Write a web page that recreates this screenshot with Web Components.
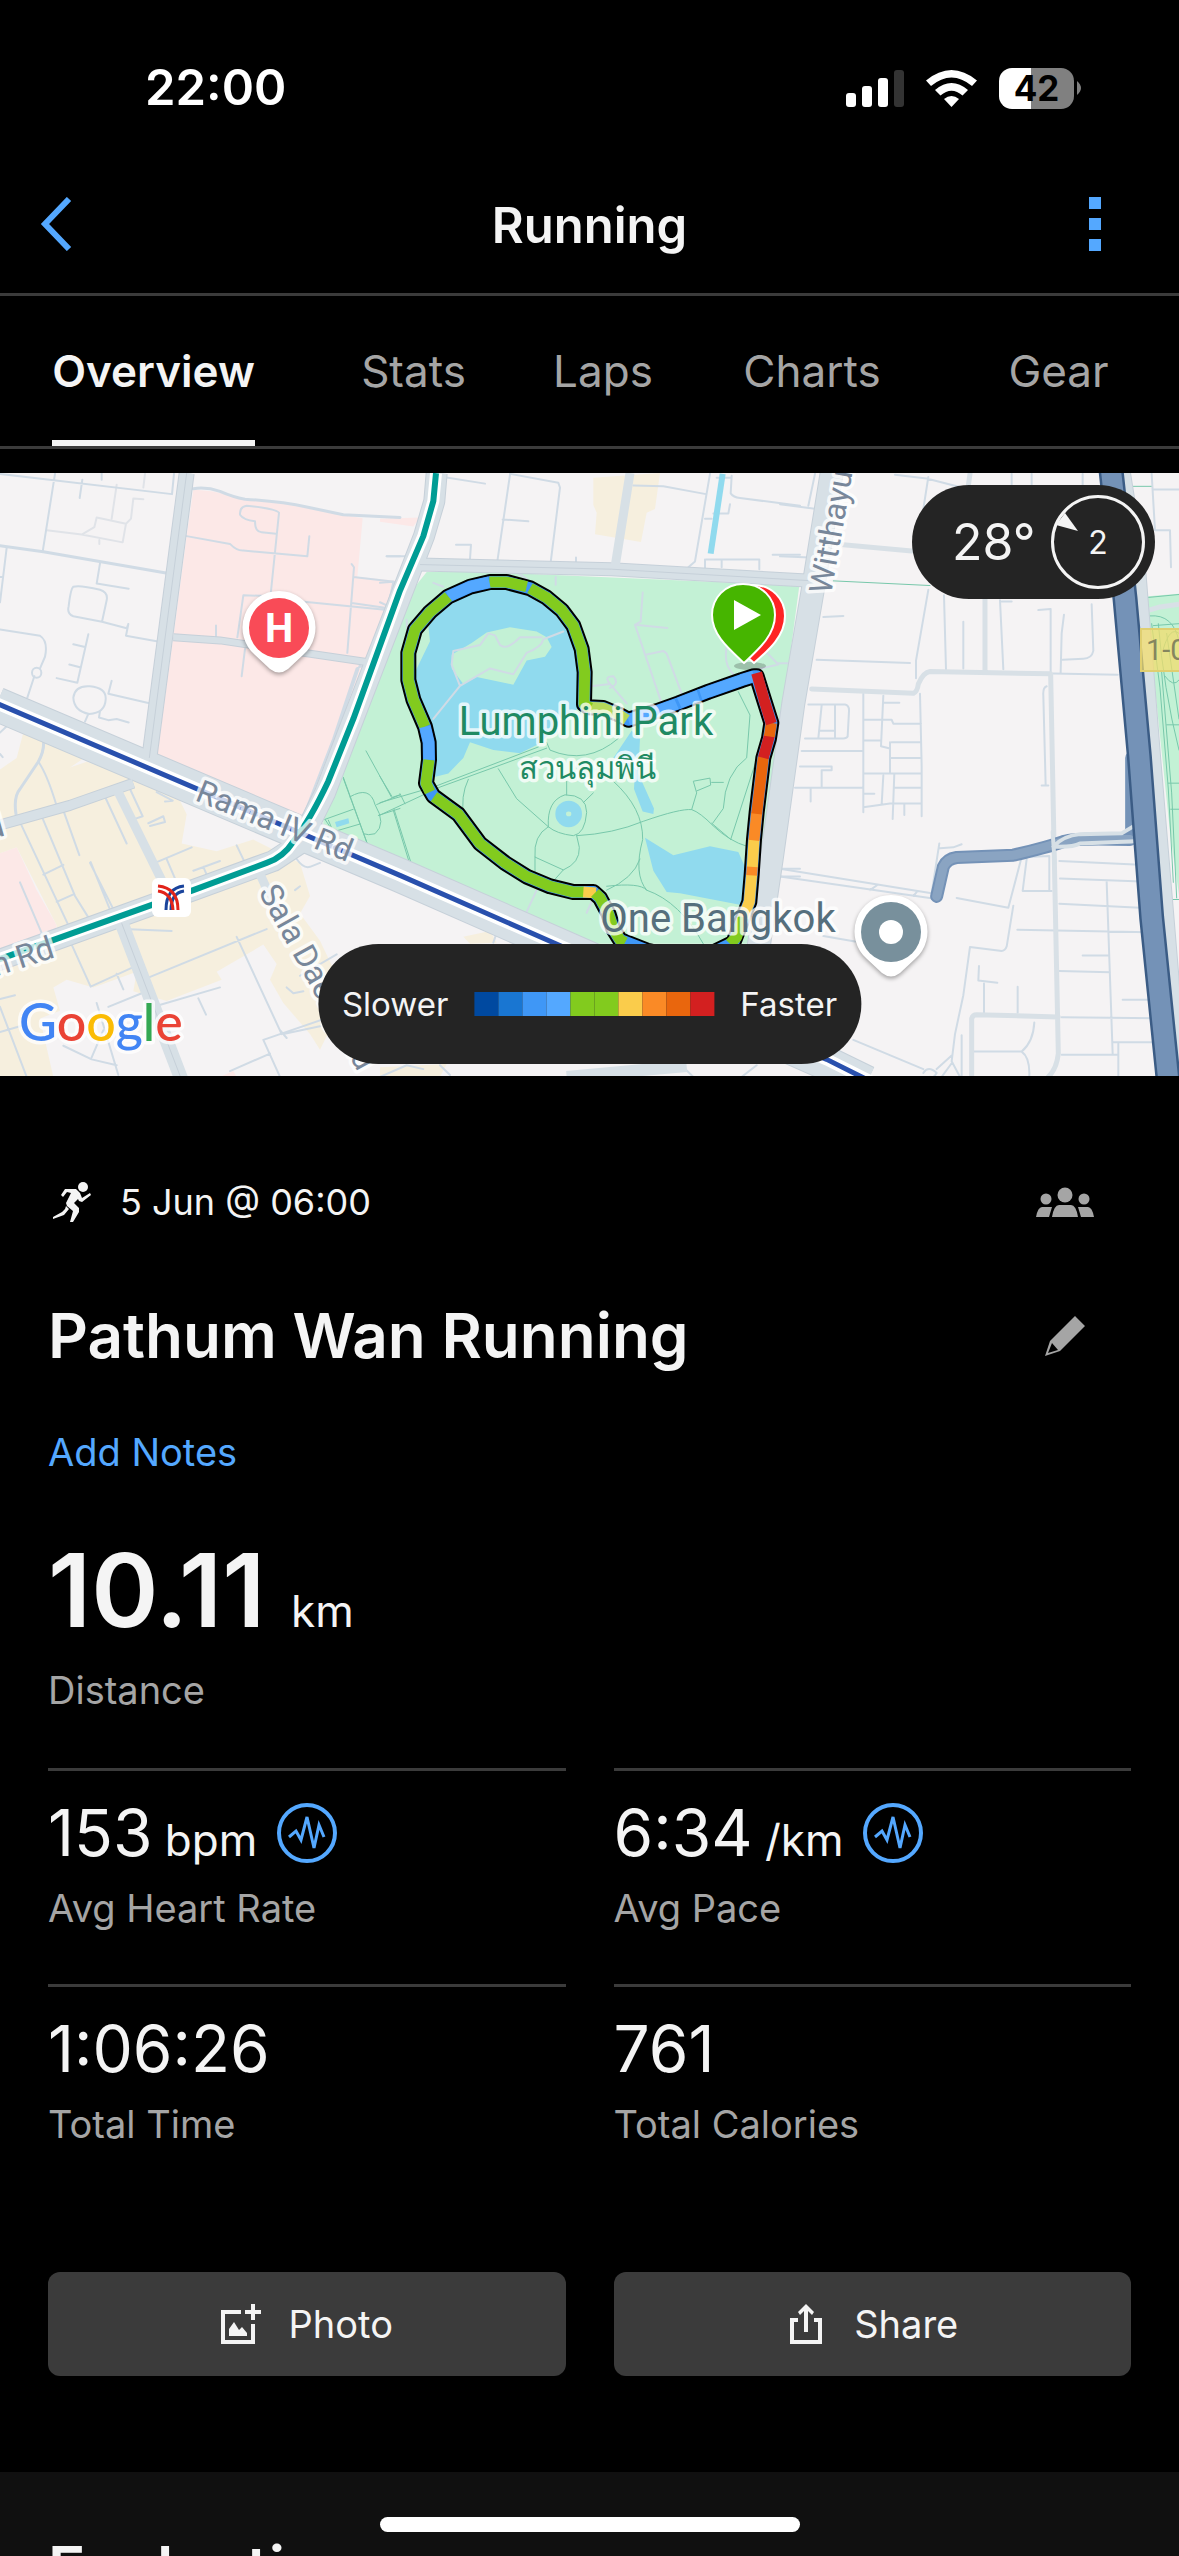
<!DOCTYPE html>
<html lang="en">
<head>
<meta charset="utf-8">
<meta name="viewport" content="width=device-width, initial-scale=1">
<title>Running</title>
<style>
  :root {
    --text: #f4f4f4;
    --muted: #a5a5a5;
    --accent: #54a8ff;
    --line: #3b3b3b;
    --panel: #242424;
    --gutter: 48px;
  }
  html, body { margin: 0; height: 100%; background: #000; overflow: hidden; }
  body { color: var(--text); font-family: Inter, "Noto Sans", sans-serif; }
</style>
</head>
<body>
<activity-app></activity-app>

<script>
const define = (name, css, html) => {
  const template = document.createElement('template');
  template.innerHTML = `<style>
    :host { display: block; box-sizing: border-box; }
    *, *::before { box-sizing: border-box; }
    button, a { font: inherit; color: inherit; background: none; border: 0; padding: 0; margin: 0; text-decoration: none; }
    svg { display: block; }
    h1, h2, p { margin: 0; font-weight: inherit; font-size: inherit; }
    ${css}</style>${html}`;
  customElements.define(name, class extends HTMLElement {
    constructor() {
      super();
      this.attachShadow({ mode: 'open' }).append(template.content.cloneNode(true));
    }
  });
};

define('status-bar', `
  :host { display: flex; justify-content: space-between; align-items: center; height: 176px; padding: 0 98px 0 145px; color: #fff; }
  time { font-size: 49px; font-weight: 600; line-height: 60px; }
  .icons { display: flex; align-items: center; gap: 22px; }
  .battery { display: flex; align-items: center; gap: 3px; }
  .level { width: 75px; height: 41px; border-radius: 13px; background: linear-gradient(90deg, #fff 43%, #808080 43%);
    color: #000; font-size: 35px; font-weight: 700; line-height: 41px; text-align: center; }
`, `
  <time>22:00</time>
  <div class="icons">
    <svg width="58" height="37" viewBox="0 0 58 37" fill="#fff" aria-hidden="true">
      <rect y="23" width="10" height="14" rx="3"/><rect x="16" y="16" width="10" height="21" rx="3"/>
      <rect x="32" y="8" width="10" height="29" rx="3"/><rect x="48" width="10" height="37" rx="3" fill="#333"/>
    </svg>
    <svg width="51" height="37" viewBox="0 0 51 37" fill="#fff" aria-hidden="true">
      <path d="M0 10.500Q25.500-10.500 51 10.500L46 16Q25.500-1 5 16Z"/>
      <path d="M9 20Q25.500 6 42 20L36.500 25.500Q25.500 16 14.500 25.500Z"/>
      <path d="M18 29Q25.500 23 33 29L25.500 37Z"/>
    </svg>
    <div class="battery"><div class="level">42</div>
      <svg width="4" height="14" viewBox="0 0 4 14" fill="#808080" aria-hidden="true"><path d="M0 0Q8 7 0 14Z"/></svg>
    </div>
  </div>
`);

define('nav-bar', `
  :host { display: grid; grid-template-columns: 169px 1fr 169px; align-items: center; height: 120px; padding-bottom: 22px; border-bottom: 3px solid var(--line); }
  h1 { text-align: center; font-size: 49px; font-weight: 600; line-height: 64px; padding-top: 4px; }
  button { height: 90px; display: grid; place-items: center; color: var(--accent); }
  .back { justify-items: start; padding-left: 40px; }
`, `
  <button class="back" aria-label="Back"><svg width="32" height="54" viewBox="0 0 32 54" fill="none" stroke="currentColor" stroke-width="6"><path d="M29 2L5 27L29 52"/></svg></button>
  <h1>Running</h1>
  <button aria-label="More"><svg width="12" height="54" viewBox="0 0 12 54" fill="currentColor"><path d="M0 0h12v12H0zM0 21h12v12H0zM0 42h12v12H0z"/></svg></button>
`);

define('tab-bar', `
  :host { border-bottom: 3px solid var(--line); }
  nav { display: grid; grid-template-columns: 307fr 213fr 166fr 252fr 241fr; justify-items: center; }
  a { display: block; height: 150px; font-size: 44px; line-height: 150px; color: var(--muted); }
  a[aria-current] { color: var(--text); font-weight: 600; border-bottom: 6px solid var(--text); }
`, `
  <nav><a href="#overview" aria-current="page">Overview</a><a href="#stats">Stats</a><a href="#laps">Laps</a><a href="#charts">Charts</a><a href="#gear">Gear</a></nav>
`);

define('weather-badge', `
  :host { display: flex; align-items: center; justify-content: space-between; width: 243px; height: 114px; padding: 0 10px 0 40px; border-radius: 57px; background: var(--panel); }
  .temp { font-size: 50px; }
  .wind { display: grid; place-items: center; width: 94px; height: 94px; }
  .wind > * { grid-area: 1 / 1; }
  .wind span { font-size: 32px; }
`, `
  <span class="temp">28°</span>
  <div class="wind"><svg width="94" height="94" viewBox="0 0 94 94" aria-hidden="true"><circle cx="47" cy="47" r="45.500" fill="none" stroke="#f4f4f4" stroke-width="3"/><path d="M14 18L5 30L27 36Z" fill="#f4f4f4"/></svg><span>2</span></div>
`);

define('speed-legend', `
  :host { display: flex; align-items: center; gap: 26px; height: 120px; padding: 0 24px; border-radius: 60px; background: var(--panel); font-size: 33px; }
  .scale { display: flex; }
  i { width: 24px; height: 24px; }
`, `
  <span>Slower</span>
  <div class="scale">${['#0049a0', '#1976d2', '#3f97f6', '#54a8ff', '#82cb1e', '#82cb1e', '#facc4b', '#fa8a26', '#e9660d', '#d32020'].map(c => `<i style="background:${c}"></i>`).join('')}</div>
  <span>Faster</span>
`);

const west = s => `<g>${s}</g>`;
const mid = s => `<g transform="translate(1140 0)">${s}</g>`;
const east = s => `<g transform="translate(2340 0)">${s}</g>`;
const seg = (color, d) => `<path stroke="${color}" d="${d}"/>`;
const route = 'M1122,530L1085,540L985,570L895,600L830,620L745,642L715,628L670,612L625,610L612,602L614,520L605,460L580,400L545,360L500,328L450,304L380,288L330,288L270,300L205,325L150,365L105,410L85,470L85,540L100,590L135,660L146,700L147,745L138,805L160,838L235,885L300,960L375,1010L440,1045L510,1070L580,1085L640,1085L660,1100L685,1140L700,1180L720,1208L800,1235L900,1255L1000,1240L1060,1215L1085,1160L1108,1110L1115,1040L1122,950L1130,880L1150,740L1167,690L1174,650L1152,590L1130,530Z';

define('route-map', `
  :host { position: relative; overflow: hidden; background: #f5f3f4; }
  .map { width: 100%; height: auto; }
  .map path, .map ellipse { vector-effect: non-scaling-stroke; }
  .halo { paint-order: stroke; stroke: #fff; stroke-opacity: .75; stroke-width: 7; stroke-linejoin: round; }
  .place { font-family: Roboto, Inter, sans-serif; font-weight: 400; font-size: 40px; }
  .local { font-size: 31px; }
  .street { font-family: Roboto, Inter, sans-serif; font-size: 32px; fill: #78879a; }
  weather-badge { position: absolute; top: 12px; right: 24px; }
  speed-legend { position: absolute; bottom: 12px; left: 50%; transform: translateX(-50%); }
`, `
<svg class="map" viewBox="0 473 1179 603" role="img" aria-label="Route map of Lumphini Park">
  <g transform="translate(0 470) scale(.33333 .38903)" fill="none" stroke-linecap="round" stroke-linejoin="round">
    <g stroke="none">
      ${west(`
        <path fill="#fce8e7" d="M580,50L640,55L735,75L860,88L1030,115L1088,124L1072,275L1190,285L1165,380L930,885L880,885L470,735L520,430L560,170ZM0,985L50,970L110,1080L170,1170L160,1210L0,1245ZM1140,125L1260,122L1240,145L1140,133ZM660,1560L700,1545L710,1560Z"/>
        <path fill="#f6efde" d="M70,675L270,730L210,765L260,750L400,790L540,850L560,885L545,960L650,980L760,950L900,1010L930,1095L900,1140L960,1210L1010,1300L1000,1420L960,1490L930,1450L850,1370L810,1310L830,1270L790,1220L650,1290L665,1310L500,1365L400,1340L410,1290L280,1330L200,1310L160,1330L180,1390L120,1410L160,1560L0,1560L0,1245L170,1205L170,1170L50,970L0,985L0,770L50,740Z"/>`)}
      ${mid(`
        <path fill="#c3f1d5" d="M140,262L300,262L1258,297L1205,640L1110,1218L640,1218L-170,965L-170,895L0,520L105,300Z"/>
        <path fill="#f6efde" d="M640,20L840,8L825,100L800,110L783,185L645,165L650,110L640,90ZM250,1200L330,1185L350,1215L270,1218ZM0,1535L200,1527L180,1560L0,1560Z"/>
        <path fill="#90daee" d="M210,340L290,312L400,302L500,345L580,430L597,540L597,610L560,640L475,705L420,728L340,720L270,700L250,740L205,780L160,790L150,690L120,610L105,520L150,440L145,400L180,360ZM755,670L780,690L775,780L822,870L820,884L788,878L762,820L765,770L700,740ZM795,945L880,990L990,967L1075,982L1100,1030L1095,1120L900,1088L860,1085L820,1030Z"/>
        <path fill="#c3f1d5" d="M215,475L275,445L320,418L390,404L470,415L500,430L515,455L495,480L440,490L400,552L290,532L250,550L215,510Z"/>
        <ellipse cx="566" cy="884" rx="40" ry="34" fill="#90daee"/><ellipse cx="566" cy="884" rx="8" ry="6" fill="#c3f1d5"/>`)}
      ${west(`<path fill="#90daee" d="M1005,905L1045,895L1048,908L1010,918Z"/>`)}
      ${east(`<path fill="#c3f1d5" d="M1095,325L1200,318L1200,1110L1170,930L1125,560Z"/>`)}
    </g>
    <g stroke="#78c8ab" stroke-width="1">
      ${west(`<path d="M1030,793L1105,968M1098,722L1175,842L1200,835M975,898L1060,872M1000,930L1080,910M985,900L1000,930L975,898M1050,840Q1110,810 1125,860Q1160,910 1125,935Q1105,940 1090,935M1130,860L1200,835M1135,888L1200,870M1180,875L1230,1015"/>`)}
      ${mid(`<path d="M-110,790L-35,968M0,788L35,838M0,855L160,815L475,712M0,887L180,815L500,715M42,872L95,1015M60,832L75,858M265,795Q240,840 252,890M355,768L410,845L505,917M500,700L510,720Q620,760 715,690M590,940Q700,935 790,903Q900,870 935,873Q960,880 1000,915Q1050,955 1100,967M700,800Q790,870 788,950Q760,1040 800,1080M680,1080Q760,1050 780,1000M680,1070Q780,1060 800,1080Q900,1110 970,1218M505,917Q500,850 555,835Q620,835 620,880Q615,935 580,940Q530,935 505,917Q460,940 465,995L550,1028Q600,1010 598,970L590,940M465,995V1050M550,1028L525,1052M560,835V800M610,855L640,830M1075,570L1110,630L1100,740Q1035,780 1030,870L998,908M1150,690L1052,950M935,873L950,830L940,800L990,792L992,810L950,825M995,803H1030M995,908L1050,948"/>`)}
      ${east(`<path d="M160,285L450,297M1055,42H1115M1100,328L1197,320M1110,375Q1180,370 1197,440M1115,395L1140,560L1165,820L1180,1060M1135,395Q1150,560 1197,720M1160,420L1197,640M1160,655H1197M1165,805H1197M1172,872H1197M1155,530Q1180,560 1197,540M1120,400L1197,395M1150,460Q1170,400 1197,420M1145,520L1175,830L1190,1100M1160,1104H1197"/>`)}
    </g>
    <g stroke="#d0dbe5" stroke-width="2">
      ${west(`
        <path stroke="#e0e3e8" d="M350,38L335,125M430,75L400,73L393,125L378,138L368,186L245,166L283,147L290,122L378,138M140,155L245,166M298,180V190M435,10L430,45"/>
        <path d="M165,10L128,210M0,10L516,62L522,10M247,25L239,72M305,8V25M20,200L0,340M0,275H8M300,240L290,292L386,305M220,300Q240,295 300,308Q325,315 320,335L306,390L220,376Q200,370 206,350Q212,305 220,300M306,390L380,407L385,396L378,426L470,440M0,410L120,426Q145,440 135,480L120,510M103,530L82,585M265,422L232,547M220,448L255,455M208,500L240,507M170,535L232,547M220,585Q225,553 270,556Q320,560 317,590Q315,625 268,627Q222,620 220,585M335,542L325,575L445,599M265,627L255,647M300,620L297,636L325,643L350,640L386,649M130,690Q135,720 115,750Q140,780 168,858M0,675L25,655M0,730L8,738"/>
        <ellipse cx="110" cy="521" rx="14" ry="13"/>
        <path stroke-width="3" d="M0,195L130,210L498,265M130,690Q135,720 115,750L60,820Q40,840 48,885M580,48Q620,43 660,55Q700,70 735,75Q850,82 920,95L1030,115L1200,122"/>
        <path d="M560,170L690,190Q710,208 730,207L922,222L928,170M837,110L812,320M837,110Q830,100 740,92Q718,95 720,115Q730,128 765,132Q765,160 785,160L828,164M712,430L730,322L800,324M905,338L1185,362M1060,275L1183,287L1160,355L1055,342M1055,242L1062,250L1042,470M1110,495L1070,510L1000,690L910,890M1080,500L1005,690L940,850M648,400V430M735,460L725,530M1160,222H1200M470,828L518,850L495,852M390,820L428,890L400,898M315,840L380,960M60,905L205,1170M125,890L225,1095L265,1150M190,875L238,990M130,1040L190,1015M170,1110L222,1090M60,1060L130,1200M270,1010L370,1180L515,1185M272,1008L330,1130M465,1010L575,970M500,1000L540,1080M580,1030L660,1005M610,1020L620,1040M710,965L735,1010M445,1305L800,1180M710,1200L845,1450M215,1220L272,1328L395,1280M350,1295L370,1335M325,1380L440,1340M440,1385L660,1330M595,1358L618,1400M290,1370L355,1555M0,1380L80,1560M0,1445L60,1430M190,1480L275,1515L350,1530M790,1465L840,1560M790,1465L1010,1400M690,1545L810,1500M885,1080L900,1070M900,1300L1010,1245M860,1330L880,1345L910,1340M850,1450L960,1430M275,1510L310,1440M0,1360L45,1350M840,1440L860,1460M450,915L495,905L490,890L445,908M890,1000Q910,1025 930,1020L960,1010"/>`)}
      ${mid(`
        <path d="M190,18L315,35M390,12L352,235M390,10L535,33L540,45L512,238M368,127L445,132M228,192H273L270,228M588,225V240M20,222H75M0,290L40,287L25,350L0,340M760,40L850,42L978,62M990,10L945,235L925,250M1055,15L1052,60Q1060,70 1080,72L1260,92M1010,20H1055M1050,88L1045,112H1000M975,125H995M978,230H1138V255M1025,232V250M975,230V260M1178,218H1260M160,290L190,300M160,640L240,555L215,500L220,465L300,450L325,420L345,425L360,450Q380,465 420,430L485,430M240,555L330,510L400,525L440,470Q485,455 490,435L550,415M415,265L440,280M527,275V295M788,315L782,390L765,398L845,600M765,398L862,406M797,475L850,465L860,472L905,575M1040,455Q1030,500 1060,525M1120,515L1195,500L1150,460M640,555L690,550L740,600M690,550Q670,530 700,530Q720,550 690,560M1190,497H1235M435,1145L470,1080M80,385L85,480M620,1138L640,1100M350,1190L340,1215M1200,1025H1260M1200,1045H1260M900,1527L940,1560M1085,1560L1130,1530M0,1560L80,1530L130,1540M180,1530L210,1555"/>`)}
      ${east(`
        <path d="M0,88L110,100M105,10L85,92M0,222L90,225M345,12L440,22L545,45M445,18L430,100M695,10V40M755,10V40M908,10V40M190,375L130,378M110,488L390,496M445,308L408,490V535M492,322L498,512M550,390V510M660,335L670,512M665,338H695M775,360L812,357V520M852,372L845,420L842,520M935,345L940,465Q935,485 910,485L848,488M820,523L1013,526M85,603H195Q208,605 207,620L203,685Q200,690 190,690H75M125,605L115,690M165,605V690M118,670H165M250,575V880M310,580L303,710L330,716M310,598H358M250,642H335L340,652H423M250,695H303M335,700H423M330,700V780M330,740H423M250,780H425M343,780L338,897M310,785L305,860M250,832H283M345,817H425M420,575L425,760V890M250,867L330,857H425M373,857V887M65,722H247M60,762H155V772H125V817M45,817H247M92,820V852M800,556Q788,560 790,580L797,810M785,811H805M0,1025L455,1088M0,1045L470,1103M270,1080L290,1068M400,1095L410,1085M530,1100L685,1125L725,995Q740,980 820,968M740,1000L728,1082H815M740,995L808,992V1080M700,1120L680,1225Q675,1238 660,1236L570,1226L550,1350L525,1450L515,1520L540,1560M838,1005L1080,1015M840,1050L1085,1058M838,1115L1095,1126M712,1182L1105,1188M838,1288L990,1291M908,1248H985M980,1058L998,1500M845,1407L1130,1409M1028,1362H1122M1000,1471H1140M845,1503H1015M1015,1475V1557M597,1275L595,1312L652,1318M612,1320V1395M713,1328V1395M583,1495H725Q760,1470 763,1420M725,1495Q750,1510 748,1557M545,1453V1557M220,1465L430,1540M430,1550Q445,1530 470,1550Q460,1565 450,1560M470,1540L515,1505M485,1560L515,1525M130,1198L225,1212M455,1088L478,960M480,972L520,970L545,962M1115,10L1125,155H1170L1173,250M1120,50H1197"/>
        <path stroke-width="5" stroke="#d8e0e6" d="M95,563L400,574Q412,570 415,550Q430,520 450,518L812,524L822,960L835,1500Q830,1540 805,1560M615,330V515M570,10L565,40M190,192L395,208M575,1560V1410Q578,1400 590,1400L835,1406M1100,362L1140,352L1200,345"/>`)}
    </g>
    <g stroke-linecap="butt">
      <path stroke="#c6d0d9" stroke-width="35" d="M-10,602L1200,1042L1700,1230L2480,1525L2600,1575"/>
      <path stroke="#c6d0d9" stroke-width="16" d="M560,8L448,740"/>
      <path stroke="#c6d0d9" stroke-width="8" d="M520,430L660,438L1110,495"/>
      <path stroke="#c6d0d9" stroke-width="11" d="M-10,915L210,862L400,805"/>
      <path stroke="#c6d0d9" stroke-width="22" d="M1310,8L1303,80L1272,170L1060,640L975,830L900,960L820,1005L580,1080L-10,1262"/>
      <path stroke="#c6d0d9" stroke-width="14" d="M1260,243L1835,255L2460,286"/>
      <path stroke="#c6d0d9" stroke-width="24" d="M2495,8L2440,300L2380,600L2315,1000L2270,1260"/>
      <path stroke="#d7e0e6" stroke-width="33" d="M-10,602L1200,1042L1700,1230L2480,1525L2600,1575"/>
      <path stroke="#d7e0e6" stroke-width="14" d="M560,8L448,740M365,1165L545,1568"/>
      <path stroke="#d7e0e6" stroke-width="9" d="M1890,8L1845,250M-10,915L210,862L400,805M350,820L500,1080M770,1020L850,1170"/>
      <path stroke="#d7e0e6" stroke-width="6" d="M520,430L660,438L1110,495"/>
      <path stroke="#d7e0e6" stroke-width="20" d="M1310,8L1303,80L1272,170L1060,640L975,830L900,960L820,1005L580,1080L-10,1262"/>
      <path stroke="#d7e0e6" stroke-width="12" d="M1260,243L1835,255L2460,286M1700,1560L2060,1532"/>
      <path stroke="#d7e0e6" stroke-width="22" d="M2495,8L2440,300L2380,600L2315,1000L2270,1260"/>
      <path stroke="#c6d0d9" stroke-width="1" d="M560,8L448,740M1260,243L1835,255L2460,286M365,1165L545,1568"/>
      ${mid('<path stroke="#90daee" stroke-width="6" d="M1028,10L992,215"/>')}
      <path stroke="#fff" stroke-width="12" d="M-10,600L1200,1042L1700,1230L2480,1515L2620,1575M1308,8L1300,80L1270,170L1200,310L1060,640L985,800Q930,900 880,955Q850,995 800,1010L580,1080L-10,1260"/>
      <path stroke="#2950ad" stroke-width="5" d="M-10,600L1200,1042L1700,1230L2480,1515L2620,1575"/>
      <path stroke="#009c94" stroke-width="6" d="M1308,8L1300,80L1270,170L1200,310L1060,640L985,800Q930,900 880,955Q850,995 800,1010L580,1080L-10,1260"/>
    </g>
    ${east(`
      <g stroke-linejoin="round">
        <path stroke="#c6d0d9" stroke-width="12" d="M1035,8L1080,250L1125,735L1180,1300L1197,1560"/>
        <path stroke="#d7e0e6" stroke-width="10" d="M1035,8L1080,250L1125,735L1180,1300L1197,1560"/>
        <path stroke="#7492b7" stroke-width="13" d="M470,1096L490,1020Q500,1000 530,996L700,990Q800,970 850,955Q890,945 1050,950M1055,740V930"/>
        <path stroke="#8aa4c2" stroke-width="9" d="M470,1096L490,1020Q500,1000 530,996L700,990Q800,970 850,955Q890,945 1050,950"/>
        <path stroke="#d7e0e6" stroke-width="4" d="M820,968Q850,940 900,936L1025,934L1060,916M820,968Q880,970 900,960L1065,954M818,930L824,1010"/>
        <path stroke="#3b5c85" stroke-width="25" stroke-linecap="butt" d="M993,0L1035,330L1078,735L1115,1150L1165,1570"/>
        <path stroke="#7492b7" stroke-width="20" stroke-linecap="butt" d="M993,0L1035,330L1078,735L1115,1150L1165,1570"/>
      </g>`)}
    ${mid(`
      <path stroke="#000" stroke-width="16" d="${route}"/>
      <path stroke="#3f97f6" stroke-width="12" d="${route}"/>
      <g stroke-width="11" stroke-linecap="butt">
        ${seg('#54a8ff', 'M1122,530L1085,540L985,570L895,600L830,620L745,642')}
        ${seg('#3f97f6', 'M955,579L962,577M890,602L898,599')}
        ${seg('#b5d85a', 'M740,642L715,628L670,612L625,610')}
        ${seg('#82cb1e', 'M630,612L612,602L614,520L605,460L580,400L545,360L500,328L450,304')}
        ${seg('#82cb1e', 'M440,300L380,288L328,288')}
        ${seg('#54a8ff', 'M328,288L270,300L205,325')}
        ${seg('#82cb1e', 'M205,325L150,365L105,410L85,470L85,540L100,590L135,660')}
        ${seg('#54a8ff', 'M135,660L146,700L147,745')}
        ${seg('#82cb1e', 'M147,745L138,805L150,828')}
        ${seg('#82cb1e', 'M162,840L235,885L300,960L375,1010L440,1045L510,1070L580,1085L612,1085')}
        ${seg('#facc4b', 'M610,1085L648,1087')}
        ${seg('#82cb1e', 'M645,1087L660,1100L685,1140L700,1180L720,1208L735,1215')}
        ${seg('#82cb1e', 'M1050,1218L1070,1200L1085,1160L1090,1150')}
        ${seg('#facc4b', 'M1090,1150L1108,1110L1115,1040')}
        ${seg('#fa8a26', 'M1115,1042L1117,1018')}
        ${seg('#facc4b', 'M1117,1020L1122,950')}
        ${seg('#fa8a26', 'M1122,952L1130,882')}
        ${seg('#e9660d', 'M1130,884L1150,738')}
        ${seg('#d32020', 'M1150,740L1166,690L1168,683')}
        ${seg('#e9660d', 'M1168,685L1174,650')}
        ${seg('#d32020', 'M1174,652L1152,590L1130,522')}
      </g>`)}
  </g>

  <rect x="152" y="878" width="39" height="39" rx="6" fill="#fff"/>
  <g fill="none" stroke-width="3"><path stroke="#1a449c" d="M184 886Q166 888 166 910M184 891Q171 893 171 910"/><path stroke="#e2231a" d="M158 886Q178 888 178 910M158 891Q172 893 173 910"/></g>

  <text class="street halo" transform="translate(194 800) rotate(22)">Rama IV Rd</text>
  <text class="street halo" transform="translate(258 892) rotate(61)">Sala Daeng Rd</text>
  <text class="street halo" transform="translate(831 595) rotate(-80)">Witthayu</text>
  <text class="street halo" text-anchor="end" transform="translate(56 957) rotate(-18)">Silom Rd</text>
  <text class="street halo" text-anchor="end" transform="translate(6 835) rotate(-16)">Rd</text>
  <text class="place halo" x="586" y="735" text-anchor="middle" fill="#1f8a63">Lumphini Park</text>
  <text class="place local halo" x="587" y="779" text-anchor="middle" fill="#1f8a63">สวนลุมพินี</text>
  <text class="place halo" x="718" y="932" text-anchor="middle" fill="#566f7d">One Bangkok</text>
  <rect x="1141" y="629" width="60" height="42" fill="#f4dc6a" fill-opacity=".72" stroke="#e0cf70" stroke-width="2"/>
  <text x="1146" y="660" font-family="Roboto, sans-serif" font-size="29" fill="#85865f">1-0</text>

  <g filter="drop-shadow(0 2px 2px rgba(0,0,0,.35))" fill="#fff">
    <path d="M279 591A36.500 36.500 0 0 0 255 655L270 669Q279 676 288 669L303 655A36.500 36.500 0 0 0 279 591Z"/>
    <path d="M891 895A36.500 36.500 0 0 0 867 959L882 973Q891 980 900 973L915 959A36.500 36.500 0 0 0 891 895Z"/>
  </g>
  <circle cx="279" cy="628" r="30" fill="#f94b57"/>
  <text x="279" y="642" text-anchor="middle" font-family="Roboto, sans-serif" font-weight="700" font-size="40" fill="#fff">H</text>
  <circle cx="891" cy="932" r="30" fill="#78909c"/><circle cx="891" cy="932" r="12" fill="#fff"/>

  <ellipse cx="750" cy="666" rx="16" ry="4" fill="#000" opacity=".2"/>
  <g stroke="#fff" stroke-width="2">
    <path fill="#fe2424" d="M753 585C772 585 785 599 785 616C785 636 769 650 754 663C739 650 723 636 723 616C723 599 736 585 753 585Z"/>
    <path fill="#46b500" d="M743 584C762 584 775 598 775 615C775 635 759 649 744 663C729 649 712 635 712 615C712 598 725 584 743 584Z"/>
  </g>
  <path d="M734 600L761 615L734 630Z" fill="#fff"/>

  <text class="halo" x="19" y="1041" font-family="Lato, sans-serif" font-size="52" font-weight="500"><tspan fill="#4285f4">G</tspan><tspan fill="#ea4335">o</tspan><tspan fill="#fbbc05">o</tspan><tspan fill="#4285f4">g</tspan><tspan fill="#34a853">l</tspan><tspan fill="#ea4335">e</tspan></text>
</svg>
<weather-badge></weather-badge>
<speed-legend></speed-legend>
`);

define('metric-tile', `
  :host { border-top: 3px solid var(--line); padding: 26px 0 52px; }
  .value { display: flex; align-items: center; gap: 20px; height: 72px; font-size: 64px; line-height: 72px; }
  ::slotted(small) { font-size: 44px; line-height: 1px; }
  svg { display: none; }
  :host([measured]) svg { display: block; }
  .label { margin-top: 15px; font-size: 38px; line-height: 48px; color: var(--muted); }
`, `
  <div class="value"><span><slot></slot></span>
    <svg width="60" height="60" viewBox="0 0 60 60" fill="none" stroke="#54a8ff" aria-hidden="true"><circle cx="30" cy="30" r="28" stroke-width="4"/><path stroke-width="3" d="M12 34L19 28L24 37L30 14L37 45L42 22L47 34"/></svg>
  </div>
  <div class="label"><slot name="label"></slot></div>
`);

define('action-button', `
  button { display: flex; align-items: center; justify-content: center; gap: 28px; width: 100%; height: 104px; border-radius: 12px; background: var(--line); color: var(--text); font-size: 38px; line-height: 48px; }
`, `<button><slot name="icon"></slot><slot></slot></button>`);

define('activity-summary', `
  :host { padding: 96px var(--gutter); }
  .row { display: flex; align-items: center; justify-content: space-between; }
  .row button { display: grid; place-items: center; width: 132px; height: 60px; color: var(--muted); }
  .when { display: flex; align-items: center; gap: 26px; height: 60px; padding-left: 4px; font-size: 36px; }
  .title { margin-top: 64px; }
  h1 { font-size: 62px; font-weight: 600; line-height: 80px; }
  .notes { display: block; width: fit-content; margin-top: 52px; font-size: 38px; line-height: 48px; color: var(--accent); }
  .distance { margin-top: 64px; font-size: 102px; font-weight: 600; line-height: 100px; }
  .distance small { font-size: 44px; font-weight: 400; line-height: 1px; }
  .label { margin-top: 26px; font-size: 38px; line-height: 48px; color: var(--muted); }
  .pair { display: grid; grid-template-columns: 1fr 1fr; column-gap: var(--gutter); }
  .metrics { margin-top: 54px; }
  .actions { margin-top: 72px; }
`, `
  <div class="row">
    <div class="when">
      <svg width="42" height="42" viewBox="0 0 42 42" fill="#f4f4f4" aria-hidden="true"><circle cx="31" cy="6" r="5"/><path d="M13 8L24 8L28 12L30 17L38 12L39 14L30 21L27 20L26 18L22 22L27 27L27 31L21 41L18 41L21 30L15 25L14 22L19 12L15 11L11 16L9 14ZM14 25L17 28L12 34L1 38L1 36L10 31L13 28Z"/></svg>
      <span>5 Jun @ 06:00</span>
    </div>
    <button aria-label="Group"><svg width="58" height="30" viewBox="0 0 58 30" fill="currentColor"><circle cx="29" cy="8" r="7.500"/><path d="M16 30Q18 18 23 18H35Q40 18 42 30Z"/><circle cx="10" cy="12" r="5.500"/><path d="M0 30Q2 20 6 20H16L13 30Z"/><circle cx="48" cy="12" r="5.500"/><path d="M58 30Q56 20 52 20H42L45 30Z"/></svg></button>
  </div>
  <div class="row title">
    <h1>Pathum Wan Running</h1>
    <button aria-label="Edit title"><svg width="40" height="40" viewBox="0 0 40 40" fill="currentColor"><path fill-rule="evenodd" d="M30 0L40 10L15 35L0 40L5 25ZM7 27L3 37L13 34Z"/></svg></button>
  </div>
  <a class="notes" href="#notes">Add Notes</a>
  <p class="distance">10.11 <small>km</small></p>
  <p class="label">Distance</p>
  <div class="pair metrics">
    <metric-tile measured>153<small> bpm</small><span slot="label">Avg Heart Rate</span></metric-tile>
    <metric-tile measured>6:34<small> /km</small><span slot="label">Avg Pace</span></metric-tile>
    <metric-tile>1:06:26<span slot="label">Total Time</span></metric-tile>
    <metric-tile>761<span slot="label">Total Calories</span></metric-tile>
  </div>
  <div class="pair actions">
    <action-button><svg slot="icon" width="40" height="40" viewBox="0 0 40 40" fill="#f4f4f4" aria-hidden="true"><path d="M0 6H20V10H4V36H30V20H34V40H0ZM30 0H34V6H40V10H34V16H30V10H24V6H30ZM8 32V25L13 18L18 26L21 23L26 29V32Z"/></svg>Photo</action-button>
    <action-button><svg slot="icon" width="40" height="40" viewBox="0 0 40 40" fill="#f4f4f4" aria-hidden="true"><path d="M4 14H12V18H8V36H32V18H28V14H36V40H4ZM20 0L28 8L26 11L22 7V28H18V7L14 11L12 8Z"/></svg>Share</action-button>
  </div>
`);

define('evaluation-panel', `
  :host { padding: 57px var(--gutter) 96px; background: #101010; }
  h2 { font-size: 62px; font-weight: 600; line-height: 80px; }
`, `<h2>Evaluation</h2>`);

define('activity-app', `
  :host { height: 100vh; overflow: hidden; position: relative; }
  main { padding-top: 24px; }
  .home { position: absolute; left: 50%; bottom: 24px; width: 420px; height: 15px; border-radius: 8px; background: #fff; transform: translateX(-50%); }
`, `
  <status-bar></status-bar>
  <nav-bar></nav-bar>
  <tab-bar></tab-bar>
  <main>
    <route-map></route-map>
    <activity-summary></activity-summary>
    <evaluation-panel></evaluation-panel>
  </main>
  <div class="home"></div>
`);
</script>
</body>
</html>
